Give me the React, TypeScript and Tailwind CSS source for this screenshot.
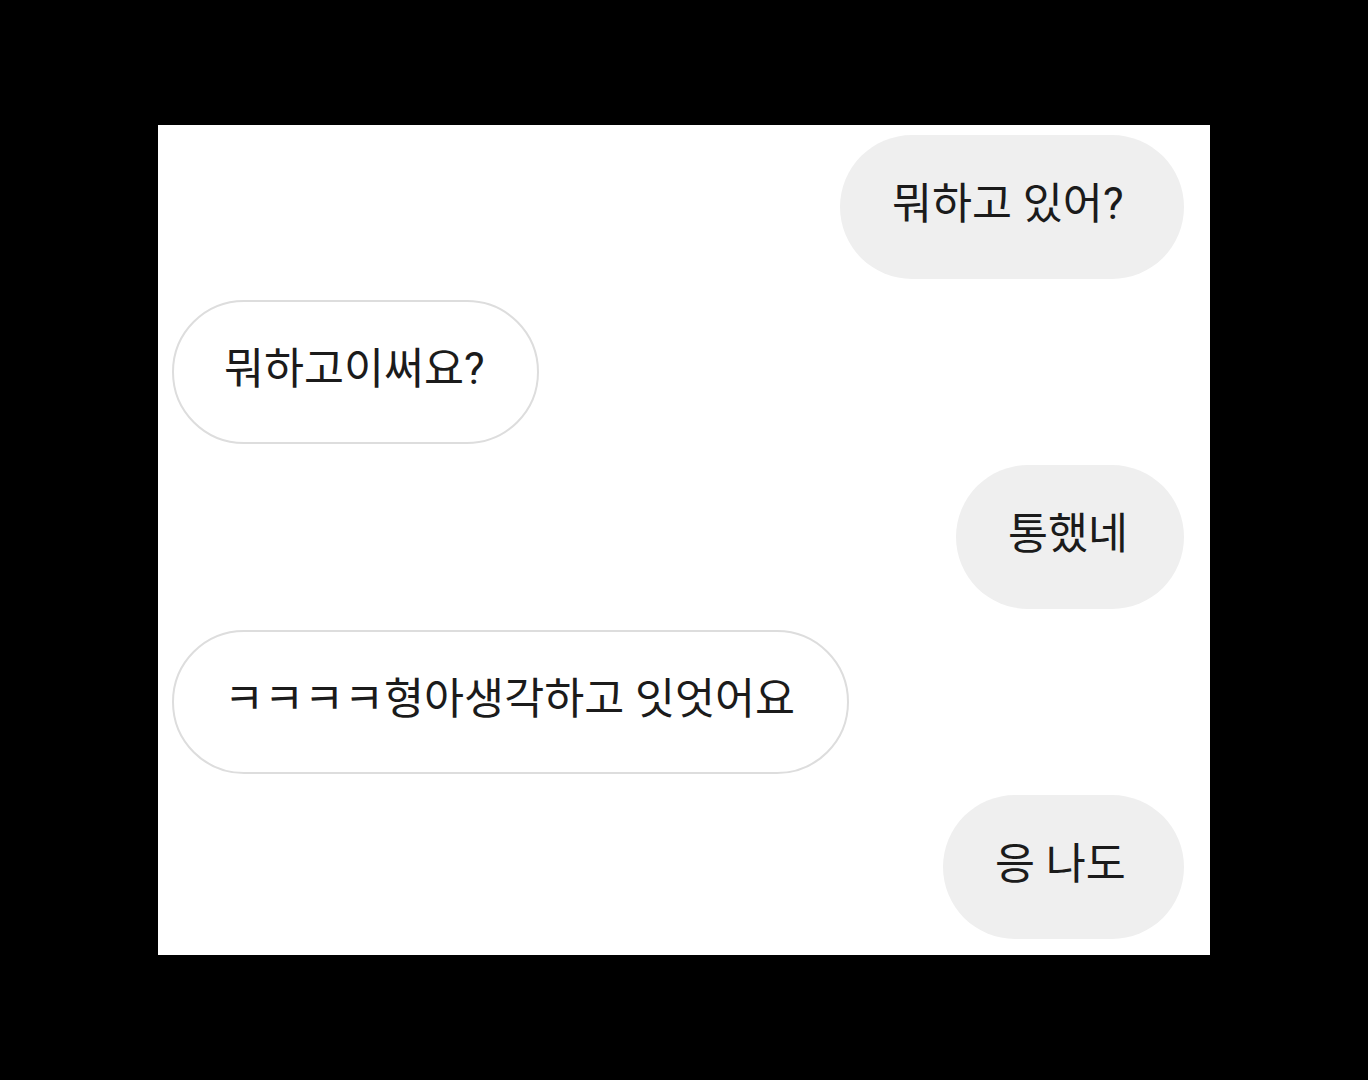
import React from 'react';

type Msg = { id: number; text: string; mine: boolean; width: string };

const messages: Msg[] = [
  { id: 1, text: '뭐하고 있어?', mine: true, width: 'w-[344px]' },
  { id: 2, text: '뭐하고이써요?', mine: false, width: 'w-[367px]' },
  { id: 3, text: '통했네', mine: true, width: 'w-[228px]' },
  { id: 4, text: 'ㅋㅋㅋㅋ형아생각하고 잇엇어요', mine: false, width: 'w-[677px]' },
  { id: 5, text: '응 나도', mine: true, width: 'w-[241px]' },
];

const Bubble: React.FC<{ msg: Msg }> = ({ msg }) => (
  <div className={`flex ${msg.mine ? 'justify-end pr-[26px]' : 'justify-start pl-[14px]'}`}>
    <div
      className={`${msg.width} h-[144px] rounded-full flex items-center ${
        msg.mine ? 'pl-[52px] bg-[#efefef]' : 'pl-[50px] bg-white border-2 border-[#dddddd]'
      } text-[43.5px] leading-none text-[#1b1b1b] whitespace-nowrap`}
    >
      <span className="-mt-[4px]">{msg.text}</span>
    </div>
  </div>
);

const App: React.FC = () => {
  return (
    <div
      className="w-[1368px] h-[1080px] bg-black pt-[125px] pl-[158px]"
      style={{ fontFamily: 'Roboto, "Noto Sans CJK KR", sans-serif' }}
    >
      <div className="w-[1052px] h-[830px] bg-white pt-[10px] flex flex-col gap-[21px]">
        {messages.map((m) => (
          <Bubble key={m.id} msg={m} />
        ))}
      </div>
    </div>
  );
};

export default App;
